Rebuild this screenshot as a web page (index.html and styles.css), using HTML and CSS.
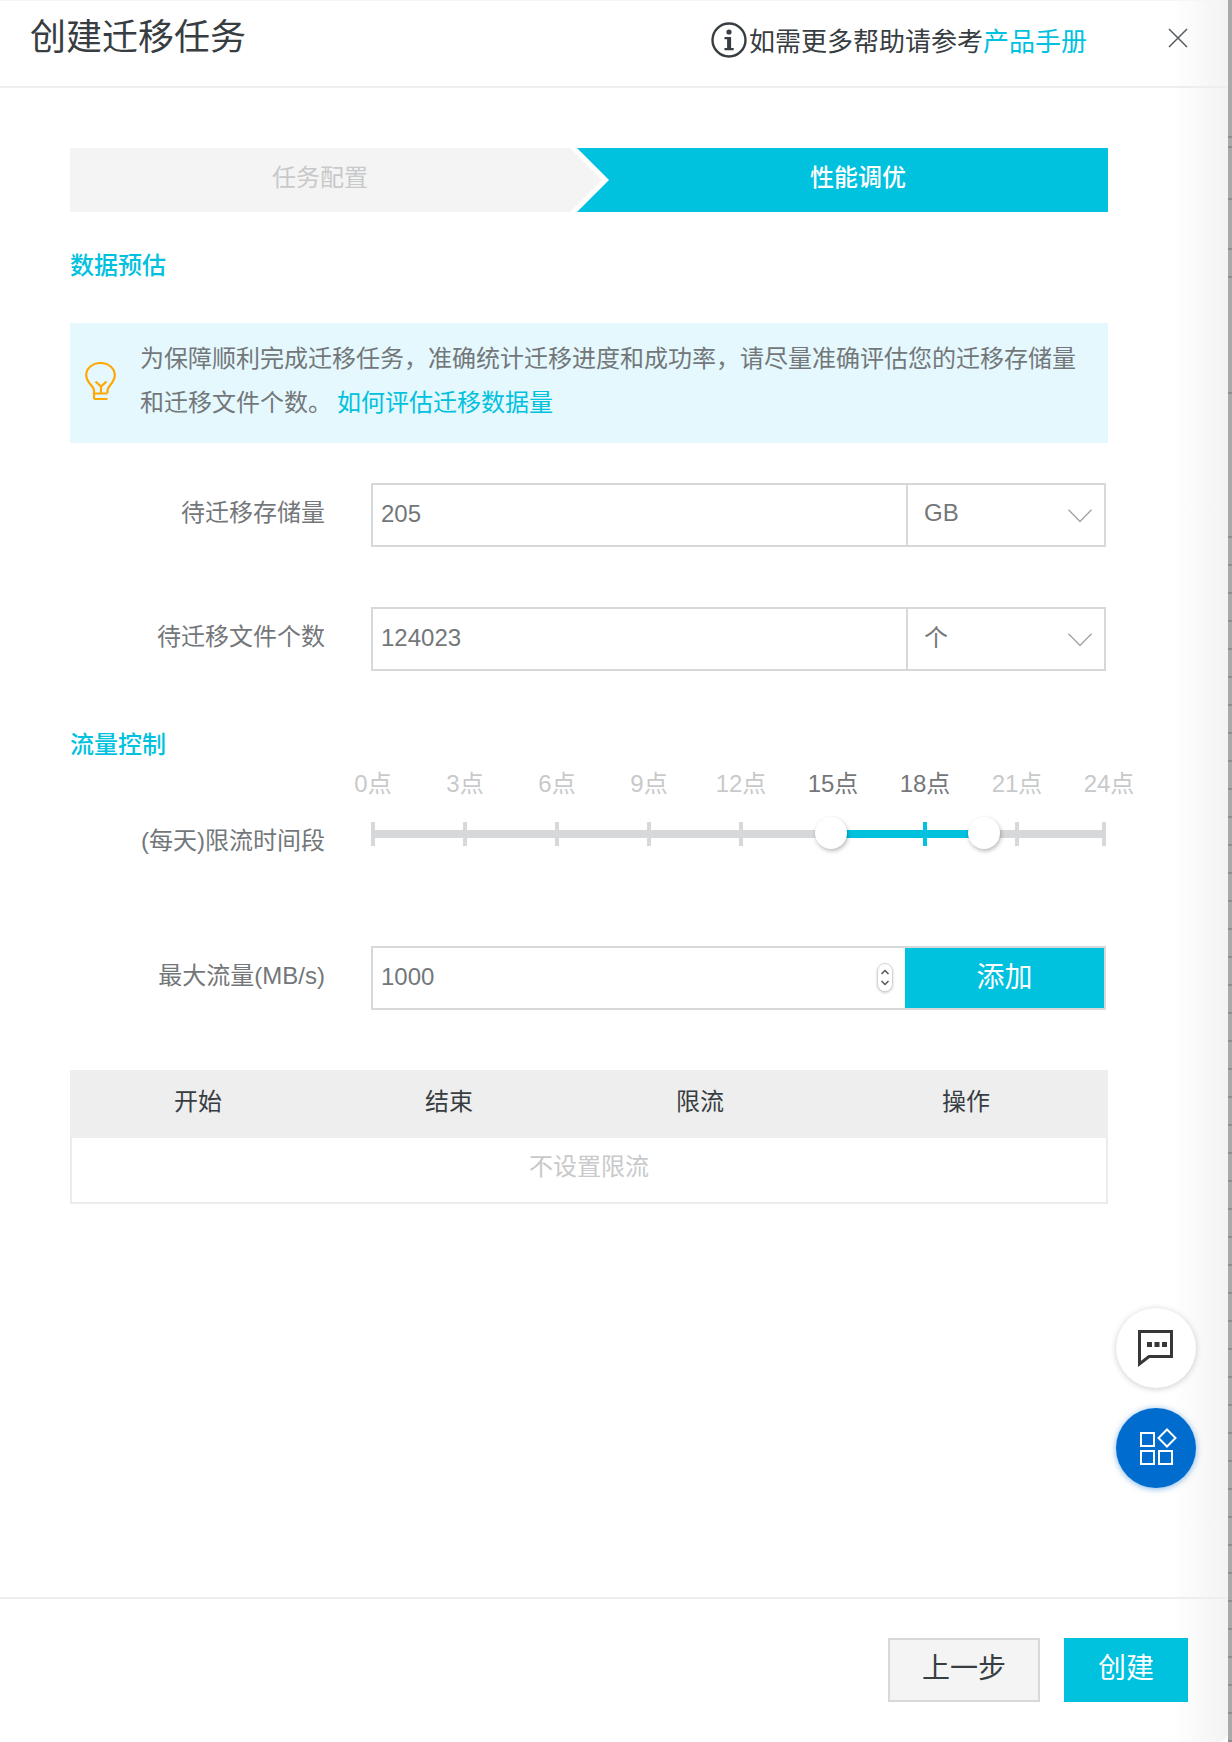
FILE: index.html
```html
<!DOCTYPE html>
<html lang="zh-CN">
<head>
<meta charset="utf-8">
<title>创建迁移任务</title>
<link rel="stylesheet" href="styles.css">
</head>
<body>
<div class="panel">
  <header class="head">
    <h1 class="title">创建迁移任务</h1>
    <div class="help">
      <svg class="help-icon" width="36" height="36" viewBox="0 0 36 36"><circle cx="18" cy="18" r="16.5" fill="none" stroke="#373d41" stroke-width="2.4"/><circle cx="18" cy="10" r="2.6" fill="#373d41"/><path d="M13.5 15h6.6v11h2.6v2.2h-9.2V26h2.6v-8.8h-2.6z" fill="#373d41"/></svg>
      <span>如需更多帮助请参考</span><a class="link">产品手册</a>
    </div>
    <svg class="close" width="20" height="20" viewBox="0 0 20 20"><path d="M1 1l18 18M19 1L1 19" stroke="#555a5e" stroke-width="1.5" fill="none"/></svg>
  </header>

  <main class="main">
    <div class="steps">
      <div class="step step-done">任务配置</div>
      <div class="step step-active">性能调优</div>
    </div>

    <h2 class="section section-first">数据预估</h2>
    <div class="alert">
      <svg class="bulb" width="31" height="38" viewBox="0 0 31 38"><path d="M9 37V28.500C9 24 1.200 21 1.200 13A14.300 12 0 0 1 29.800 13C29.800 21 22.500 24 22.500 28.500V31M9 31.500H22.500M9 37H22.500M16 31V24.500M10.500 19.500L16 24.500 21.500 19.500" fill="none" stroke="#ffa800" stroke-width="2.200"/></svg>
      <div class="alert-text">
        <p class="alert-line">为保障顺利完成迁移任务，准确统计迁移进度和成功率，请尽量准确评估您的迁移存储量</p>
        <p class="alert-line"><span>和迁移文件个数。</span><a class="link alert-link">如何评估迁移数据量</a></p>
      </div>
    </div>

    <div class="row row-first">
      <label class="label">待迁移存储量</label>
      <div class="control">
        <input class="input" type="text" value="205">
        <div class="select"><span>GB</span><svg width="24" height="14" viewBox="0 0 24 14"><path d="M.5.8L12 12.600 23.500.8" fill="none" stroke="#a3a6a8" stroke-width="1.400"/></svg></div>
      </div>
    </div>
    <div class="row row-next">
      <label class="label">待迁移文件个数</label>
      <div class="control">
        <input class="input" type="text" value="124023">
        <div class="select"><span class="unit-cjk">个</span><svg width="24" height="14" viewBox="0 0 24 14"><path d="M.5.8L12 12.600 23.500.8" fill="none" stroke="#a3a6a8" stroke-width="1.400"/></svg></div>
      </div>
    </div>

    <h2 class="section section-second">流量控制</h2>
    <div class="row row-slider">
      <label class="label label-slider">(每天)限流时间段</label>
      <div class="slider">
        <div class="marks">
          <span>0点</span><span>3点</span><span>6点</span><span>9点</span><span>12点</span><span class="on">15点</span><span class="on">18点</span><span>21点</span><span>24点</span>
        </div>
        <div class="rail">
          <i class="tick"></i><i class="tick"></i><i class="tick"></i><i class="tick"></i><i class="tick"></i><i class="tick tick-hidden"></i><i class="tick tick-on"></i><i class="tick"></i><i class="tick tick-last"></i>
          <b class="fill"></b>
          <b class="handle handle-a"></b>
          <b class="handle handle-b"></b>
        </div>
      </div>
    </div>

    <div class="row row-flow">
      <label class="label">最大流量(MB/s)</label>
      <div class="control">
        <input class="input" type="text" value="1000">
        <svg class="spin" width="16" height="30" viewBox="0 0 16 30"><rect x=".5" y=".5" width="15" height="28" rx="7.500" fill="#fff" stroke="#d4d4d4"/><path d="M4.500 11l3.500-3.500 3.500 3.500M4.500 18l3.500 3.500 3.500-3.500" fill="none" stroke="#555" stroke-width="1.500"/></svg>
        <button class="add" type="button">添加</button>
      </div>
    </div>

    <table class="table">
      <colgroup><col class="c1"><col class="c2"><col class="c3"><col class="c4"></colgroup>
      <thead><tr><th>开始</th><th>结束</th><th>限流</th><th>操作</th></tr></thead>
      <tbody><tr><td colspan="4">不设置限流</td></tr></tbody>
    </table>
  </main>

  <footer class="foot">
    <button class="btn btn-ghost" type="button">上一步</button>
    <button class="btn btn-primary" type="button">创建</button>
  </footer>

  <button class="fab fab-chat" type="button" aria-label="chat">
    <svg width="80" height="80" viewBox="0 0 80 80"><path d="M23.500 23.500H55.500V48.500H33L23.500 56z" fill="none" stroke="#373737" stroke-width="3"/><path d="M31 34h5v5h-5zM38.500 34h5v5h-5zM46 34h5v5h-5z" fill="#373737"/></svg>
  </button>
  <button class="fab fab-apps" type="button" aria-label="apps">
    <svg width="80" height="80" viewBox="0 0 80 80"><path d="M25 25h13v13H25zM25 43h13v13H25zM43 43h13v13H43zM51 21.500L59.500 30 51 38.500 42.500 30z" fill="none" stroke="#fff" stroke-width="2"/></svg>
  </button>
</div>
<div class="strip"></div>
</body>
</html>
```
FILE: styles.css
```css
* { box-sizing: border-box; }
html, body { margin: 0; padding: 0; }
body {
  width: 1232px;
  height: 1742px;
  display: flex;
  overflow: hidden;
  background: #fff;
  font-family: "Liberation Sans", "Noto Sans CJK SC", sans-serif;
  font-size: 24px;
  color: #73777a;
}
.panel {
  position: relative;
  width: 1228px;
  height: 1742px;
  display: flex;
  flex-direction: column;
  border-top: 1px solid #f6f6f6;
  border-bottom-right-radius: 10px;
  background: linear-gradient(to right, #fff 1172px, #f3f3f3 1228px);
}
.strip {
  width: 4px;
  height: 1742px;
  background:
    linear-gradient(#8e8e8e, #8e8e8e) 0 136px / 100% 2px no-repeat,
    linear-gradient(#8e8e8e, #8e8e8e) 0 146px / 100% 2px no-repeat,
    linear-gradient(#8e8e8e, #8e8e8e) 0 198px / 100% 2px no-repeat,
    linear-gradient(#8e8e8e, #8e8e8e) 0 248px / 100% 2px no-repeat,
    linear-gradient(#8e8e8e, #8e8e8e) 0 276px / 100% 2px no-repeat,
    linear-gradient(#8e8e8e, #8e8e8e) 0 392px / 100% 2px no-repeat,
    repeating-linear-gradient(#a9a9a9 0 26px, #8e8e8e 26px 28px) 0 510px / 100% 100% no-repeat,
    #a9a9a9;
}
.link { color: #00c1de; }

.head {
  flex: none;
  height: 87px;
  display: flex;
  align-items: flex-start;
  padding-left: 30px;
  border-bottom: 2px solid #eeeeee;
}
.title {
  margin: 1px 0 0;
  font-size: 36px;
  line-height: 72px;
  font-weight: 400;
  color: #373d41;
}
.help {
  margin: 21px 0 0 auto;
  display: flex;
  align-items: flex-start;
  height: 36px;
  font-size: 26px;
  line-height: 40px;
  color: #373d41;
}
.help-icon { margin-right: 2px; }
.close { margin: 27px 40px 0 81px; }

.main {
  flex: 1;
  padding: 60px 0 0 70px;
}
.steps { display: flex; width: 1038px; height: 64px; }
.step {
  height: 64px;
  display: flex;
  align-items: center;
  justify-content: center;
  padding-bottom: 10px;
}
.step-done {
  width: 532px;
  padding-right: 32px;
  background: #f4f4f4;
  color: #c8c9ca;
  clip-path: polygon(0 0, 500px 0, 100% 50%, 500px 100%, 0 100%);
}
.step-active {
  width: 531px;
  margin-left: -25px;
  padding-left: 31px;
  background: #00c1de;
  color: #fff;
  font-weight: 500;
  clip-path: polygon(0 0, 100% 0, 100% 100%, 0 100%, 32px 50%);
}
.section {
  margin: 0;
  font-size: 24px;
  line-height: 32px;
  font-weight: 500;
  color: #00c1de;
}
.section-first { margin-top: 38px; }
.section-second { margin-top: 58px; }

.alert {
  width: 1038px;
  height: 120px;
  margin-top: 41px;
  padding: 14px 20px 0 15px;
  display: flex;
  align-items: flex-start;
  background: #e4f8fd;
}
.bulb { flex: none; margin: 25px 24px 0 0; }
.alert-text { line-height: 44px; }
.alert-line { margin: 0; }
.alert-link { margin-left: 5px; }

.row { display: flex; align-items: flex-start; }
.row-first { margin-top: 40px; }
.row-next { margin-top: 60px; }
.row-slider { margin-top: 7px; }
.row-flow { margin-top: 75px; }
.label {
  flex: none;
  width: 255px;
  margin-right: 46px;
  line-height: 60px;
  text-align: right;
}
.label-slider { margin-top: 43px; }
.control {
  position: relative;
  width: 735px;
  height: 64px;
  display: flex;
  border: 2px solid #d7d8d9;
}
.input {
  flex: 1;
  min-width: 0;
  height: 60px;
  padding: 0 8px 2px;
  border: 0;
  outline: 0;
  background: transparent;
  font: inherit;
  color: #73777a;
}
.select {
  flex: none;
  width: 198px;
  height: 60px;
  padding: 0 12px 4px 16px;
  display: flex;
  align-items: center;
  justify-content: space-between;
  border-left: 2px solid #d7d8d9;
}
.select svg { margin-top: 6px; }
.unit-cjk { margin-top: -3px; }
.spin {
  position: absolute;
  right: 211px;
  top: 15px;
  filter: drop-shadow(0 1px 1px rgba(0, 0, 0, .2));
}
.add {
  flex: none;
  width: 199px;
  height: 60px;
  margin-left: 1px;
  padding: 0 0 6px;
  border: 0;
  background: #00c1de;
  font: inherit;
  font-size: 28px;
  color: #fff;
}

.slider { width: 735px; }
.marks {
  display: grid;
  grid-template-columns: repeat(9, 92px);
  margin-left: -44px;
  line-height: 32px;
  text-align: center;
  color: #c8c9ca;
}
.marks .on { color: #73777a; }
.rail {
  position: relative;
  height: 24px;
  margin-top: 22px;
  display: flex;
  gap: 88px;
  background: linear-gradient(#d7d8d9, #d7d8d9) 0 8px / 100% 8px no-repeat;
}
.tick { flex: none; width: 4px; height: 24px; background: #d7d8d9; }
.tick-hidden { visibility: hidden; }
.tick-on { position: relative; z-index: 1; background: #00c1de; }
.tick-last { margin-left: -5px; }
.fill {
  position: absolute;
  left: 460px;
  width: 138px;
  top: 8px;
  height: 8px;
  background: #00c1de;
}
.handle {
  position: absolute;
  top: -5px;
  width: 32px;
  height: 32px;
  border-radius: 50%;
  background: #fff;
  box-shadow: 1px 2px 4px rgba(0, 0, 0, .28);
  z-index: 2;
}
.handle-a { left: 444px; }
.handle-b { left: 597px; }

.table {
  width: 1038px;
  margin-top: 60px;
  table-layout: fixed;
  border-collapse: separate;
  border-spacing: 0;
}
.c1 { width: 256px; }
.c2 { width: 246px; }
.c3 { width: 256px; }
.c4 { width: 280px; }
.table th {
  height: 68px;
  padding: 0 0 9px;
  background: #eeeeee;
  font-weight: 400;
  color: #373d41;
}
.table th:last-child { padding-right: 4px; }
.table td {
  height: 66px;
  padding: 0 0 12px;
  border: 2px solid #ececec;
  border-top: 0;
  text-align: center;
  color: #c8c9ca;
}

.foot {
  flex: none;
  height: 145px;
  padding: 39px 40px 0 0;
  display: flex;
  justify-content: flex-end;
  align-items: flex-start;
  gap: 24px;
  border-top: 2px solid #eeeeee;
}
.btn {
  height: 64px;
  padding: 0 0 8px;
  font: inherit;
  font-size: 28px;
}
.btn-ghost {
  width: 152px;
  border: 2px solid #d7d8d9;
  background: #f4f4f4;
  color: #373d41;
}
.btn-primary {
  width: 124px;
  border: 0;
  background: #00c1de;
  color: #fff;
}
.fab {
  position: absolute;
  left: 1116px;
  width: 80px;
  height: 80px;
  padding: 0;
  border: 0;
  border-radius: 50%;
}
.fab svg { display: block; }
.fab-chat {
  top: 1307px;
  background: #fff;
  box-shadow: 0 1px 6px rgba(0, 0, 0, .2);
}
.fab-apps {
  top: 1407px;
  background: #006cce;
  box-shadow: 0 1px 6px rgba(0, 108, 206, .5);
}
```
